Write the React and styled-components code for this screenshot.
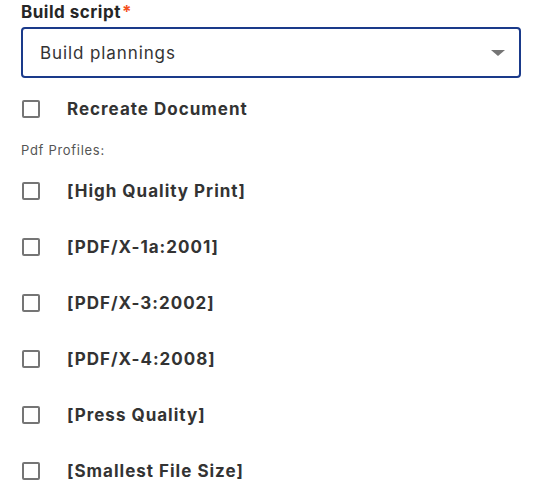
import styled, { createGlobalStyle } from 'styled-components';

const GlobalStyle = createGlobalStyle`
  html, body {
    margin: 0;
    padding: 0;
    background: #ffffff;
  }

  body {
    font-family: Inter, 'Noto Sans', sans-serif;
    color: #333333;
  }
`;

const Form = styled.div`
  width: 500px;
  padding: 2px 0 0 21px;
  display: flex;
  flex-direction: column;
`;

const FieldLabel = styled.label`
  font-size: 17px;
  font-weight: 700;
  line-height: 20px;
  letter-spacing: 0.5px;
  color: #262626;
`;

const Required = styled.span`
  color: #f4511e;
  margin-left: 1px;
`;

const Select = styled.div`
  margin-top: 5px;
  height: 51px;
  box-sizing: border-box;
  border: 2px solid #1a3a8a;
  border-radius: 4px;
  display: flex;
  align-items: center;
  justify-content: space-between;
  padding: 0 14px 0 17px;
  font-size: 17px;
  letter-spacing: 0.9px;
  color: #333333;
`;

const Caret = styled.span`
  width: 0;
  height: 0;
  border-left: 7px solid transparent;
  border-right: 7px solid transparent;
  border-top: 6px solid #757575;
`;

const Row = styled.label`
  display: flex;
  align-items: center;
  height: 56px;
  margin-left: 1px;
  font-size: 17px;
  font-weight: 700;
  letter-spacing: 1px;
  color: #333333;

  ${({ first }) => first && `margin-top: 3px;`}
`;

const Box = styled.span`
  width: 18px;
  height: 18px;
  box-sizing: border-box;
  border: 2px solid #757575;
  border-radius: 2px;
  margin-right: 27px;
  flex-shrink: 0;
`;

const SectionLabel = styled.div`
  font-size: 13px;
  color: #555555;
  line-height: 16px;
  letter-spacing: 0.7px;
  margin: 5px 0;
`;

const profiles = [
  '[High Quality Print]',
  '[PDF/X-1a:2001]',
  '[PDF/X-3:2002]',
  '[PDF/X-4:2008]',
  '[Press Quality]',
  '[Smallest File Size]',
];

export default function App() {
  return (
    <>
      <GlobalStyle />
      <Form>
        <FieldLabel>
          Build script<Required>*</Required>
        </FieldLabel>
        <Select>
          <span>Build plannings</span>
          <Caret />
        </Select>
        <Row first>
          <Box />
          Recreate Document
        </Row>
        <SectionLabel>Pdf Profiles:</SectionLabel>
        {profiles.map((p) => (
          <Row key={p}>
            <Box />
            {p}
          </Row>
        ))}
      </Form>
    </>
  );
}
